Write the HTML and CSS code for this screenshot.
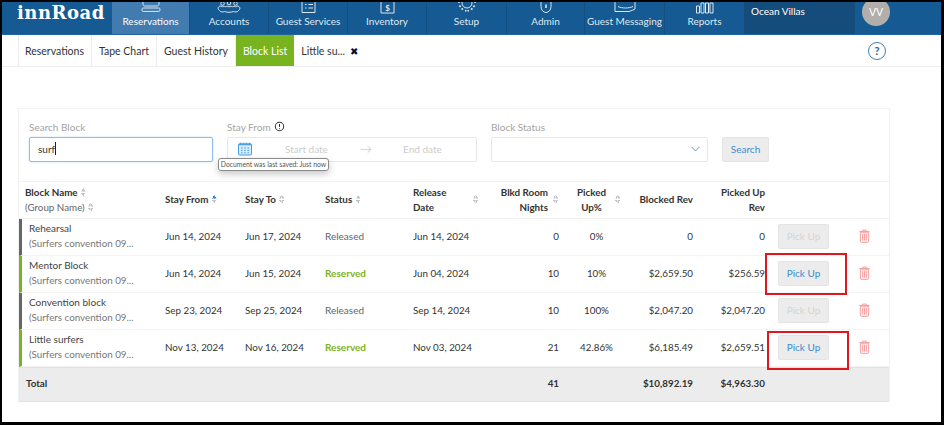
FILE: index.html
```html
<!DOCTYPE html>
<html lang="en">
<head>
<meta charset="utf-8">
<title>innRoad Block List</title>
<link rel="stylesheet" href="styles.css">
</head>
<body>
<div class="frame">
  <header class="topbar">
    <div class="logo">innRoad</div>
    <nav class="mainnav">
      <a class="nav w-res active"><svg class="ni" viewBox="0 0 28 12"><path d="M6 0v2c0 1 .6 2 1.6 2h12.8c1 0 1.6-1 1.6-2V0"/><rect x="5" y="6" width="18" height="3.4" rx="1.2"/></svg><span>Reservations</span></a>
      <a class="nav w-acc"><svg class="ni" viewBox="0 0 28 12"><circle cx="7.5" cy="1.5" r="1.8"/><circle cx="14" cy="1" r="1.8"/><circle cx="20.5" cy="1.5" r="1.8"/><path d="M6 4c-3 0-4 3-1.500 4.500 1 2 4 1.500 5 1 2 1 7 1 9 0 1 .5 4 1 5-1C26 7 25 4 22 4c-1 1-2 1-3 0-1 1-2 1-3 0-1 1-3 1-4 0-1 1-2 1-3 0-1 1-2 1-3 0z"/></svg><span>Accounts</span></a>
      <a class="nav w-gs"><svg class="ni" viewBox="0 0 28 12"><path d="M8 0v10.500h13V0M11 2.500h1.500M14.500 2.500H19M11 6h1.500M14.500 6H19"/></svg><span>Guest Services</span></a>
      <a class="nav w-inv"><svg class="ni" viewBox="0 0 28 12"><path d="M8 0v11h13V0"/><text x="14.500" y="8.500" class="nt">$</text></svg><span>Inventory</span></a>
      <a class="nav w-set"><svg class="ni" viewBox="0 0 28 12"><circle cx="14" cy="1" r="5"/><path class="thick" d="M6 4l2 .5M22 4l-2 .5M8.500 7.500 10 6.500M19.500 7.500 18 6.500M12.500 9.500l.5-1.500M15.500 9.500 15 8M5 0h2M21 0h2"/></svg><span>Setup</span></a>
      <a class="nav w-adm"><svg class="ni" viewBox="0 0 28 12"><path d="M9 0v4.500C9 8 11.500 10.500 14 10.500S19 8 19 4.500V0"/><path class="thick" d="M14 2.500v3.500"/></svg><span>Admin</span></a>
      <a class="nav w-msg"><svg class="ni" viewBox="0 0 28 12"><path d="M4 0v9.500h14l4-1.500 2-1V0M7 4.500c4 2 11 2 15 0"/></svg><span>Guest Messaging</span></a>
      <a class="nav w-rep"><svg class="ni" viewBox="0 0 28 12"><path d="M5.500 4h3v7h-3zM10 1h3v10h-3zM14.500 1h3v10h-3zM19 1h3v10h-3z"/></svg><span>Reports</span></a>
    </nav>
    <div class="property">Ocean Villas</div>
    <div class="userwrap"><div class="avatar">VV</div></div>
  </header>

  <div class="subnav">
    <div class="tabs">
      <a class="tab">Reservations</a>
      <a class="tab">Tape Chart</a>
      <a class="tab">Guest History</a>
      <a class="tab on">Block List</a>
      <a class="tab last">Little su... <span class="x">✖</span></a>
    </div>
    <div class="help">?</div>
  </div>

  <main class="card">
    <form class="filters">
      <div class="field f-block">
        <label>Search Block</label>
        <div class="input focus">surf<i class="caret"></i></div>
      </div>
      <div class="field f-stay">
        <label>Stay From <svg class="info" viewBox="0 0 12 12"><circle cx="6" cy="6" r="4.600"/><path d="M6 3.200v3.400M6 7.800v1"/></svg></label>
        <div class="input range">
          <svg class="cal" viewBox="0 0 16 14"><rect x="1.500" y="2" width="13" height="11" rx="1"/><path class="calh" d="M1.500 2.500h13M3.500 0.800v2M6.500 0.800v2M9.500 0.800v2M12.500 0.800v2"/><path class="cald" d="M4 6h1.600M7.200 6h1.600M10.400 6H12M4 8.400h1.600M7.200 8.400h1.600M10.400 8.400H12M4 10.800h1.600M7.200 10.800h1.600M10.400 10.800H12"/></svg>
          <span class="ph ph1">Start date</span><span class="arrow">→</span><span class="ph ph2">End date</span>
        </div>
        <div class="tooltip">Document was last saved: Just now</div>
      </div>
      <div class="field f-status">
        <label>Block Status</label>
        <div class="input select"><svg class="chev" viewBox="0 0 10 6"><path d="M.7.700 5 5.200 9.300.700"/></svg></div>
      </div>
      <button type="button" class="btn search">Search</button>
    </form>

    <table class="grid">
      <colgroup>
        <col class="c1"><col class="c2"><col class="c3"><col class="c4"><col class="c5"><col class="c6"><col class="c7"><col class="c8"><col class="c9"><col class="c10"><col class="c11">
      </colgroup>
      <thead>
        <tr>
          <th class="first"><span class="thl">Block Name <i class="sort"></i></span><span class="thl sub">(Group Name) <i class="sort"></i></span></th>
          <th>Stay From <i class="sort asc"></i></th>
          <th>Stay To <i class="sort"></i></th>
          <th>Status <i class="sort"></i></th>
          <th><div class="thsplit rel-h"><span>Release<br>Date</span><i class="sort"></i></div></th>
          <th><div class="thsplit right"><span>Blkd Room<br>Nights</span><i class="sort"></i></div></th>
          <th><div class="thsplit center"><span>Picked<br>Up%</span><i class="sort"></i></div></th>
          <th class="r">Blocked Rev</th>
          <th class="r">Picked Up<br>Rev</th>
          <th></th><th></th>
        </tr>
      </thead>
      <tbody>
        <tr>
          <td class="first gray"><div class="nm">Rehearsal</div><div class="gp">(Surfers convention 09...</div></td>
          <td>Jun 14, 2024</td><td>Jun 17, 2024</td><td class="rel">Released</td><td>Jun 14, 2024</td>
          <td class="r">0</td><td class="c">0%</td><td class="r">0</td><td class="r">0</td>
          <td class="act"><button type="button" class="btn pick off">Pick Up</button></td>
          <td><svg class="trash" viewBox="0 0 12 15"><path d="M4 2V1h4v1M.5 2.600h11M1.500 3.400h9V13c0 1-.5 1.500-1.500 1.500H3c-1 0-1.500-.5-1.500-1.500zM4 5v7.500M6 5v7.500M8 5v7.500"/></svg></td>
        </tr>
        <tr>
          <td class="first green"><div class="nm">Mentor Block</div><div class="gp">(Surfers convention 09...</div></td>
          <td>Jun 14, 2024</td><td>Jun 15, 2024</td><td class="res">Reserved</td><td>Jun 04, 2024</td>
          <td class="r">10</td><td class="c">10%</td><td class="r">$2,659.50</td><td class="r">$256.59</td>
          <td class="act"><span class="mark m1"></span><button type="button" class="btn pick">Pick Up</button></td>
          <td><svg class="trash" viewBox="0 0 12 15"><path d="M4 2V1h4v1M.5 2.600h11M1.500 3.400h9V13c0 1-.5 1.500-1.500 1.500H3c-1 0-1.500-.5-1.500-1.500zM4 5v7.500M6 5v7.500M8 5v7.500"/></svg></td>
        </tr>
        <tr>
          <td class="first gray"><div class="nm">Convention block</div><div class="gp">(Surfers convention 09...</div></td>
          <td>Sep 23, 2024</td><td>Sep 25, 2024</td><td class="rel">Released</td><td>Sep 14, 2024</td>
          <td class="r">10</td><td class="c">100%</td><td class="r">$2,047.20</td><td class="r">$2,047.20</td>
          <td class="act"><button type="button" class="btn pick off">Pick Up</button></td>
          <td><svg class="trash" viewBox="0 0 12 15"><path d="M4 2V1h4v1M.5 2.600h11M1.500 3.400h9V13c0 1-.5 1.500-1.500 1.500H3c-1 0-1.500-.5-1.500-1.500zM4 5v7.500M6 5v7.500M8 5v7.500"/></svg></td>
        </tr>
        <tr>
          <td class="first green"><div class="nm">Little surfers</div><div class="gp">(Surfers convention 09...</div></td>
          <td>Nov 13, 2024</td><td>Nov 16, 2024</td><td class="res">Reserved</td><td>Nov 03, 2024</td>
          <td class="r">21</td><td class="c">42.86%</td><td class="r">$6,185.49</td><td class="r">$2,659.51</td>
          <td class="act"><span class="mark m2"></span><button type="button" class="btn pick">Pick Up</button></td>
          <td><svg class="trash" viewBox="0 0 12 15"><path d="M4 2V1h4v1M.5 2.600h11M1.500 3.400h9V13c0 1-.5 1.500-1.500 1.500H3c-1 0-1.500-.5-1.500-1.500zM4 5v7.500M6 5v7.500M8 5v7.500"/></svg></td>
        </tr>
      </tbody>
      <tfoot>
        <tr>
          <td class="tot" colspan="5">Total</td>
          <td class="r">41</td><td></td><td class="r">$10,892.19</td><td class="r">$4,963.30</td><td></td><td></td>
        </tr>
      </tfoot>
    </table>
  </main>
</div>
</body>
</html>
```
FILE: styles.css
```css
* { box-sizing: border-box; }
html, body { margin: 0; padding: 0; height: 100%; background: #000; overflow: hidden; }
body { font-family: Lato, "Open Sans", sans-serif; font-size: 10.5px; color: #333; }
.frame { width: 944px; height: 425px; background: #fff; border: solid #000; border-width: 2px 3px 3px 2px; overflow: hidden; }

.topbar { display: flex; height: 33px; background: #155a92; border-bottom: 1px solid #1f659b; }
.logo { width: 110px; padding: 0 0 0 15px; font-family: "DejaVu Serif", serif; font-weight: 700; font-size: 18px; letter-spacing: .5px; color: #fff; }
.mainnav { display: flex; }
.nav { display: flex; flex-direction: column; align-items: center; color: #dfe9f1; font-size: 10px; line-height: 13px; border-right: 1px solid #114f83; height: 32px; white-space: nowrap; }
.nav span { margin-top: 1px; }
.ni { width: 28px; height: 12px; fill: none; stroke: #dbe6ef; stroke-width: 1; flex: none; }
.thick { stroke-width: 1.6; }
.nt { font-size: 8px; fill: #dbe6ef; stroke: none; text-anchor: middle; font-weight: 700; font-family: Lato, sans-serif; }
.active { background: #417bb0; color: #fff; }
.w-res { width: 78px; }
.w-acc { width: 79px; }
.w-gs { width: 79px; }
.w-inv { width: 79px; }
.w-set { width: 80px; }
.w-adm { width: 78px; }
.w-msg { width: 80px; }
.w-rep { width: 79px; border-right: 0; }
.property { width: 111px; background: #144c7b; color: #fff; font-size: 10px; padding: 3px 0 0 7px; height: 32px; }
.userwrap { flex: 1; padding-left: 7px; }
.avatar { width: 28px; height: 28px; margin-top: -4px; border-radius: 50%; background: #b1aeab; color: #fff; font-size: 10.5px; display: flex; align-items: center; justify-content: center; }

.subnav { display: flex; align-items: flex-start; height: 32px; padding: 0 52px 0 16px; border-bottom: 1px solid #eeeeee; }
.tabs { display: flex; height: 31px; }
.tab { display: flex; align-items: center; padding: 0 7px; border-right: 1px solid #ececec; color: #333; font-size: 10.5px; }
.tab:first-child { padding-left: 6px; border-left: 1px solid #ececec; }
.tab.on { background: #78b41f; color: #fff; border-right: 0; }
.tab.last { border: 0; white-space: pre; }
.x { font-size: 10px; color: #111; margin-left: 2px; }
.help { margin: 7px 0 0 auto; width: 18px; height: 18px; border: 1px solid #3f7fb2; border-radius: 50%; color: #2e5f8e; font-weight: 700; font-size: 11px; line-height: 16px; text-align: center; margin-right: 3px; }

.card { margin: 41px 0 0 16px; width: 872px; height: 294px; border: 1px solid #f1f1f1; }
.filters { display: flex; align-items: flex-start; height: 73px; padding: 12px 0 0 10px; border-bottom: 1px solid #f1f1f1; }
.field { position: relative; display: flex; flex-direction: column; }
.field label { color: #a3a3a3; font-size: 10px; line-height: 12px; height: 16px; display: flex; gap: 3px; }
.f-block { width: 184px; margin-right: 14px; }
.f-stay { width: 250px; margin-right: 14px; }
.f-status { width: 217px; margin-right: 14px; }
.input { height: 25px; border: 1px solid #e8e8e8; border-radius: 2px; font-size: 10px; padding: 0 8px 2px; display: flex; align-items: center; background: #fff; }
.focus { border-color: #8dbdee; box-shadow: 0 0 2px rgba(64,144,224,.35); color: #333; }
.caret { display: inline-block; width: 1px; height: 13px; background: #222; margin-left: 0; }
.info { width: 11px; height: 11px; fill: none; stroke: #333; stroke-width: 1.1; }
.range { padding: 0 0 2px 9px; }
.cal { width: 16px; height: 14px; flex: none; fill: #d9ecfb; stroke: #4aa0e6; stroke-width: 1; }
.calh { stroke-width: 1.6; fill: none; }
.cald { fill: none; stroke-width: 1; }
.ph { color: #ccc; font-size: 10px; }
.ph1 { margin-left: 32px; width: 75px; }
.arrow { width: 43px; color: #d0d0d0; font-size: 12px; }
.tooltip { position: absolute; left: -9px; top: 37px; width: 111px; height: 13px; background: #fff; border: 1px solid #8a8a8a; border-radius: 3px; color: #555; font-size: 6.8px; line-height: 11px; text-align: center; white-space: nowrap; box-shadow: 0 3px 7px rgba(0,0,0,.22); z-index: 2; }
.select { padding-right: 7px; }
.chev { margin-left: auto; width: 9px; height: 6px; fill: none; stroke: #5b94c4; stroke-width: 1; }
.btn { font: inherit; font-size: 10px; border: 1px solid #e4e4e4; background: #ececec; border-radius: 2px; color: #428bca; }
.search { width: 47px; height: 25px; margin-top: 16px; padding: 0 0 2px; }

.grid { width: 870px; border-collapse: separate; border-spacing: 0; table-layout: fixed; }
.c1 { width: 146px; } .c2 { width: 80px; } .c3 { width: 80px; } .c4 { width: 88px; } .c5 { width: 69px; }
.c6 { width: 77px; } .c7 { width: 75px; } .c8 { width: 59px; } .c9 { width: 72px; } .c10 { width: 94px; } .c11 { width: 30px; }
.grid th { height: 37px; text-align: left; font-weight: 700; font-size: 9.8px; line-height: 15px; color: #333; padding: 0 0 1px; border-bottom: 1px solid #f1f1f1; vertical-align: middle; white-space: nowrap; }
.grid th.first { padding-left: 6px; }
.thl { display: block; }
.sub { font-weight: 400; color: #666; }
.grid td { height: 37px; padding: 0 0 2px; font-size: 9.8px; color: #333; border-bottom: 1px solid #f3f3f3; vertical-align: middle; white-space: nowrap; }
.grid th.r, .grid td.r { text-align: right; }
.grid td.c { text-align: center; }
.thsplit { display: flex; align-items: center; }
.thsplit.rel-h { justify-content: space-between; padding-right: 4px; }
.thsplit.right { justify-content: flex-end; text-align: right; gap: 4px; padding-right: 1px; }
.thsplit.center { text-align: center; gap: 8px; padding-left: 18px; }
.sort { display: inline-block; width: 5px; height: 9px; vertical-align: -1px; margin-left: 1px; background:
  linear-gradient(to bottom right, transparent 50%, #c4c4c4 50%) 0 0/2.5px 3.5px no-repeat,
  linear-gradient(to bottom left, transparent 50%, #c4c4c4 50%) 2.5px 0/2.5px 3.5px no-repeat,
  linear-gradient(to top right, transparent 50%, #c4c4c4 50%) 0 5px/2.5px 3.5px no-repeat,
  linear-gradient(to top left, transparent 50%, #c4c4c4 50%) 2.5px 5px/2.5px 3.5px no-repeat; }
.sort.asc { background:
  linear-gradient(to bottom right, transparent 50%, #2f7fe0 50%) 0 0/2.5px 3.5px no-repeat,
  linear-gradient(to bottom left, transparent 50%, #2f7fe0 50%) 2.5px 0/2.5px 3.5px no-repeat,
  linear-gradient(to top right, transparent 50%, #c4c4c4 50%) 0 5px/2.5px 3.5px no-repeat,
  linear-gradient(to top left, transparent 50%, #c4c4c4 50%) 2.5px 5px/2.5px 3.5px no-repeat; }
.grid td.first { padding-left: 7px; border-left: 3px solid; line-height: 15px; }
.grid td.gray { border-left-color: #666; }
.grid td.green { border-left-color: #78b41f; }
.nm { color: #444; font-size: 10px; }
.gp { color: #777; font-size: 9.8px; }
.grid td.rel { color: #666; font-size: 10px; }
.grid td.res { color: #78b41f; font-weight: 700; font-size: 10px; }
.act { position: relative; }
.pick { position: relative; display: block; width: 51px; height: 25px; margin-left: 13px; padding: 0 0 1px; z-index: 1; }
.off { color: #d4d4d4; }
.mark { position: absolute; border: 2px solid #e0161e; }
.m1 { left: 0; top: -3px; width: 82px; height: 42px; }
.m2 { left: 2px; top: 1px; width: 82px; height: 39px; }
.trash { display: block; width: 11px; height: 14px; fill: #fff2f2; stroke: #f59a9a; stroke-width: 1; }
.grid tfoot td { height: 35px; padding-bottom: 3px; background: #ececec; font-weight: 700; font-size: 9.8px; color: #333; border-top: 1px solid #e2e2e2; border-bottom: 1px solid #e2e2e2; }
.grid tfoot td.tot { padding-left: 7px; }
```
